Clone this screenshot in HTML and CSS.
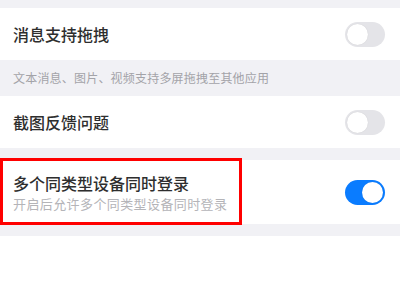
FILE: index.html
```html
<!DOCTYPE html>
<html lang="zh">
<head>
<meta charset="utf-8">
<link rel="stylesheet" href="styles.css">
</head>
<body>
<div class="page">
  <div class="row">
    <span class="title">消息支持拖拽</span>
    <span class="switch"></span>
  </div>
  <div class="caption">文本消息、图片、视频支持多屏拖拽至其他应用</div>
  <div class="row">
    <span class="title">截图反馈问题</span>
    <span class="switch"></span>
  </div>
  <div class="gap"></div>
  <div class="row row-tall">
    <div class="texts">
      <span class="title">多个同类型设备同时登录</span>
      <span class="sub">开启后允许多个同类型设备同时登录</span>
    </div>
    <span class="switch on"></span>
    <div class="highlight"></div>
  </div>
  <div class="gap"></div>
</div>
</body>
</html>
```

FILE: styles.css
```css
html, body {
  margin: 0;
  padding: 0;
  background: #ffffff;
  font-family: "Noto Sans CJK SC", "Noto Sans", sans-serif;
}
.page {
  background: #f1f1f5;
  padding-top: 8px;
  display: flex;
  flex-direction: column;
}
.row {
  position: relative;
  background: #ffffff;
  height: 52px;
  display: flex;
  align-items: center;
  justify-content: space-between;
  padding: 0 15px 0 13px;
}
.row-tall {
  height: 64px;
}
.title {
  font-size: 16px;
  font-weight: 500;
  color: #2e2e2e;
  line-height: 20px;
}
.texts {
  display: flex;
  flex-direction: column;
  padding-top: 2px;
}
.sub {
  font-size: 13px;
  color: #b4b4b8;
  line-height: 18px;
  margin-top: 2px;
  letter-spacing: 0.4px;
}
.caption {
  height: 36px;
  line-height: 36px;
  padding: 0 13px;
  font-size: 12px;
  color: #a3a3a8;
  letter-spacing: 0.2px;
}
.gap {
  height: 12px;
}
.switch {
  width: 40px;
  height: 25px;
  border-radius: 13px;
  background: #e4e4e8;
  position: relative;
  flex: none;
}
.switch::after {
  content: "";
  position: absolute;
  left: 2px;
  top: 2px;
  width: 21px;
  height: 21px;
  border-radius: 50%;
  background: #ffffff;
  box-shadow: 0 0 1px rgba(0,0,0,0.15);
}
.switch.on {
  background: #0a7cff;
}
.switch.on::after {
  left: 17px;
}
.highlight {
  position: absolute;
  left: 0;
  top: -2px;
  width: 242px;
  height: 67px;
  box-sizing: border-box;
  border: 3px solid #ff0000;
}
```
